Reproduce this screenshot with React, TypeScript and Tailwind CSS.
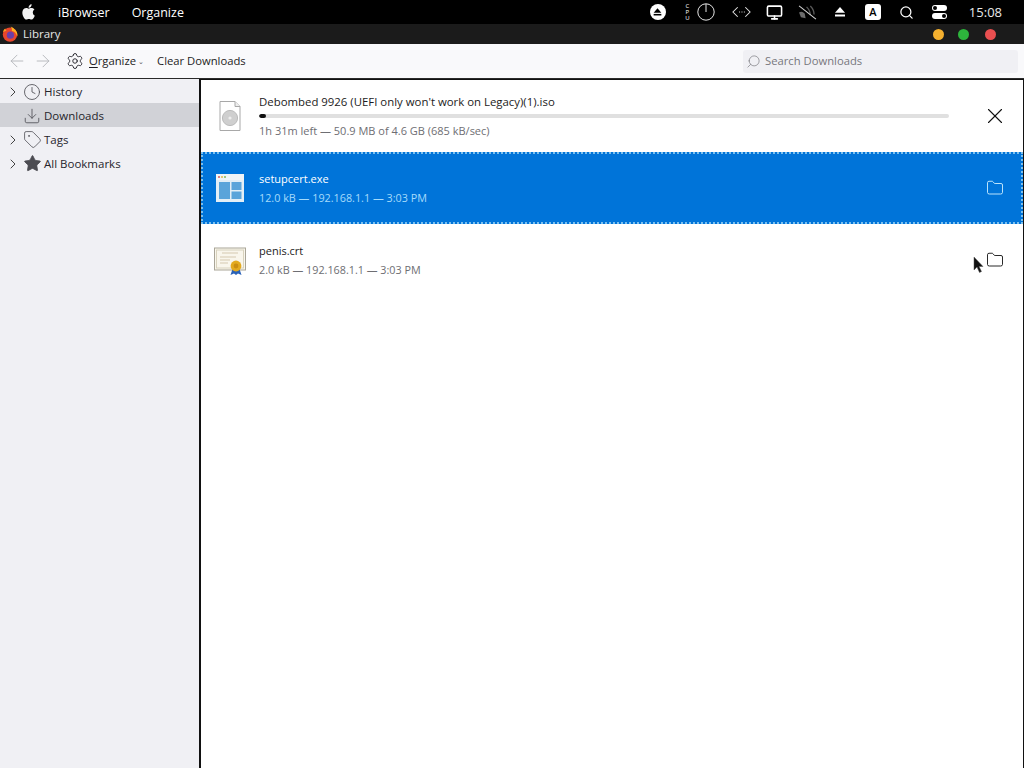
import React from 'react';
import { ChevronRight, Clock, Download, Tag, Star, Settings, ArrowLeft, ArrowRight, Search, X, Folder, Monitor } from 'lucide-react';

const font = { fontFamily: '"Open Sans", sans-serif' };

const Eject = ({ className }: { className?: string }) => (
  <svg viewBox="0 0 14 12" className={className} fill="currentColor">
    <path d="M7 0 L13 7 H1 Z" />
    <rect x="1" y="9" width="12" height="2.4" />
  </svg>
);

const MenuBar = () => (
  <div className="h-6 bg-black text-white flex items-center text-[12.5px] relative">
    <svg viewBox="0 0 24 24" className="w-[18px] h-[18px] ml-[20px] mb-[1px]" fill="#f2f2f2">
      <path d="M17.05 12.54c-.03-2.6 2.12-3.85 2.22-3.91-1.21-1.77-3.09-2.01-3.76-2.04-1.6-.16-3.12.94-3.93.94-.81 0-2.06-.92-3.39-.89-1.74.03-3.35 1.01-4.25 2.57-1.81 3.14-.46 7.8 1.3 10.35.86 1.25 1.89 2.65 3.23 2.6 1.3-.05 1.79-.84 3.36-.84s2.01.84 3.39.81c1.4-.03 2.28-1.27 3.14-2.53.99-1.45 1.4-2.85 1.42-2.93-.03-.01-2.72-1.04-2.73-4.13zM14.47 4.9c.72-.87 1.2-2.08 1.07-3.28-1.03.04-2.28.69-3.02 1.55-.66.77-1.24 2-1.09 3.18 1.15.09 2.32-.58 3.04-1.45z" />
    </svg>
    <span className="ml-[20px] pt-[2px]">iBrowser</span>
    <span className="ml-[22px] pt-[2px]">Organize</span>
    <div className="ml-auto flex items-center h-full">
      <div className="w-4 h-4 rounded-full bg-white flex items-center justify-center mr-[19px]">
        <Eject className="w-[9px] h-[8px] text-black" />
      </div>
      <div className="w-[5px] flex flex-col items-center text-[6px] leading-[6px] mr-[7px]">
        <span>C</span>
        <span>P</span>
        <span>U</span>
      </div>
      <svg viewBox="0 0 18 18" className="w-[18px] h-[18px] mr-[17px]" fill="none" stroke="#e5e5e5" strokeWidth="1">
        <circle cx="9" cy="9" r="8.2" />
        <path d="M9 1 V9" />
      </svg>
      <svg viewBox="0 0 20 14" className="w-[19px] h-[14px] mr-[15px]" fill="none" stroke="#e5e5e5" strokeWidth="1.1">
        <path d="M6 2 L1 7 L6 12 M14 2 L19 7 L14 12" />
        <path d="M7.5 7 h1 M10 7 h1 M12.5 7 h1" />
      </svg>
      <Monitor className="w-[17px] h-[17px] mr-[15px]" strokeWidth={2.2} />
      <svg viewBox="0 0 20 16" className="w-[19px] h-[15px] mr-[17px]" fill="none">
        <path d="M1 8 Q4 6 7 9 L8 14 L3 13 Z" fill="#6b6b6b" />
        <path d="M9 2 Q13 6 13 11 M13 1 Q17 5 17 10" stroke="#5a5a5a" strokeWidth="1.4" />
        <path d="M1 1 L19 15" stroke="#d8d8d8" strokeWidth="1.1" />
      </svg>
      <Eject className="w-[12px] h-[10px] text-white mr-[19px]" />
      <div className="w-4 h-4 rounded-[3px] bg-white text-black flex items-center justify-center text-[11px] font-semibold mr-[18px]">A</div>
      <Search className="w-[15px] h-[15px] mr-[18px]" strokeWidth={2} />
      <div className="flex flex-col gap-[2px] w-[15px] mr-[22px]">
        <div className="h-[6px] rounded-full bg-white flex justify-start items-center pl-[1px]">
          <div className="w-1 h-1 rounded-full bg-black" />
        </div>
        <div className="h-[6px] rounded-full bg-white flex justify-end items-center pr-[1px]">
          <div className="w-1 h-1 rounded-full bg-black" />
        </div>
      </div>
      <span className="mr-[22px] pt-[2px] text-[13px] text-[#e8e8e8]">15:08</span>
    </div>
  </div>
);

const TitleBar = () => (
  <div className="h-5 bg-[#1b1b1b] flex items-center text-[#e6e6e6] text-[11.5px]">
    <svg viewBox="0 0 16 16" className="w-4 h-4 ml-[2px]">
      <circle cx="8" cy="8.6" r="7.2" fill="#e8462c" />
      <circle cx="8.4" cy="9.2" r="3.6" fill="#6b3fa8" />
      <path d="M8.6 .4 C13 2.4 16 6 15.4 10.4 C14 7 12.4 5.4 9.8 5 C10.2 3.4 9.8 1.8 8.6 .4 Z" fill="#ffb11f" />
      <path d="M1 6 C1.4 4.4 2.4 3.2 3.4 2.6 C3.4 3.6 3.8 4.4 4.6 4.8 C3 5.2 2 6 1 6 Z" fill="#ff9a1f" />
    </svg>
    <span className="ml-[5px]">Library</span>
    <div className="ml-auto flex items-center">
      <div className="w-[11px] h-[11px] rounded-full bg-[#f4b02f]" />
      <div className="w-[11px] h-[11px] rounded-full bg-[#2db53c] ml-[14px]" />
      <div className="w-[11px] h-[11px] rounded-full bg-[#e94f50] ml-[16px] mr-[28px]" />
    </div>
  </div>
);

const ToolBar = () => (
  <div className="h-[35px] bg-[#f9f9fb] flex items-center text-[11.25px] text-[#1c1b22] border-b border-[#2a2a2a]">
    <ArrowLeft className="w-5 h-5 ml-[7px] text-[#b4b6ba]" strokeWidth={1.1} />
    <ArrowRight className="w-5 h-5 ml-[6px] text-[#b4b6ba]" strokeWidth={1.1} />
    <Settings className="w-[18px] h-[18px] ml-[13px]" strokeWidth={1.2} />
    <span className="ml-[5px]"><span className="underline underline-offset-2">O</span>rganize</span>
    <span className="ml-[2px] text-[7px] leading-none text-[#555]">⌄</span>
    <span className="ml-[13px]">Clear Downloads</span>
    <div className="ml-auto w-[275px] h-[23px] bg-[#f0f0f4] rounded-[3px] flex items-center text-[#77777d] mr-[6px]">
      <Search className="w-[15px] h-[15px] ml-[3px] -scale-x-100" strokeWidth={1.1} />
      <span className="ml-[4px]">Search Downloads</span>
    </div>
  </div>
);

const SideItem = ({ icon, label, expand = true, active = false }: { icon: React.ReactNode; label: string; expand?: boolean; active?: boolean }) => (
  <div className={`h-6 pt-[1px] flex items-center text-[11.5px] text-[#26252c] ${active ? 'bg-[#d1d2d7]' : ''}`}>
    <div className="w-[24px] pl-[5px]">
      {expand && <ChevronRight className="w-4 h-4 text-[#444]" strokeWidth={1.5} />}
    </div>
    <div className="w-4 h-4 flex items-center justify-center text-[#4c4c52]">{icon}</div>
    <span className="ml-[4px]">{label}</span>
  </div>
);

const SideBar = () => (
  <div className="w-[199px] bg-[#f0f0f4] shrink-0">
    <SideItem icon={<Clock className="w-[18px] h-[18px] shrink-0" strokeWidth={1.1} />} label="History" />
    <SideItem icon={<Download className="w-[18px] h-[18px] shrink-0" strokeWidth={1.1} />} label="Downloads" expand={false} active />
    <SideItem icon={<Tag className="w-[19px] h-[19px] shrink-0" strokeWidth={1} />} label="Tags" />
    <SideItem icon={<Star className="w-[19px] h-[19px] shrink-0" fill="currentColor" strokeWidth={1} />} label="All Bookmarks" />
  </div>
);

const IsoIcon = () => (
  <svg viewBox="0 0 22 30" className="w-[22px] h-[30px]">
    <path d="M1 .5 H16 L21 5.5 V29.5 H1 Z" fill="#fff" stroke="#a8a8a8" />
    <path d="M16 .5 V5.5 H21" fill="#eee" stroke="#a8a8a8" />
    <circle cx="11" cy="17" r="7.6" fill="#cfcfcf" stroke="#bbb" />
    <circle cx="11" cy="17" r="1.6" fill="#eee" />
  </svg>
);

const ExeIcon = () => (
  <svg viewBox="0 0 30 30" className="w-[30px] h-[30px]">
    <rect x="1" y="1" width="28" height="28" fill="#e2eef6" />
    <rect x="1" y="1" width="28" height="6" fill="#f0f4f7" />
    <circle cx="4" cy="4" r="1" fill="#d65a5a" />
    <circle cx="7" cy="4" r="1" fill="#e0b94a" />
    <circle cx="10" cy="4" r="1" fill="#7fb85a" />
    <rect x="4" y="9" width="11" height="17" fill="#5aa4da" />
    <rect x="16.5" y="9" width="10" height="8" fill="#5aa4da" />
    <rect x="16.5" y="18.5" width="10" height="7.5" fill="#5aa4da" />
  </svg>
);

const CertIcon = () => (
  <svg viewBox="0 0 32 30" className="w-8 h-[30px]">
    <rect x=".5" y="3" width="31" height="22" fill="#f9f6ec" stroke="#a9a597" strokeWidth="1" />
    <rect x="2.5" y="5" width="27" height="18" fill="none" stroke="#d8d2bd" />
    <path d="M8 8 H24 M6 12 H22 M6 15 H16 M6 18 H14" stroke="#d5c9b0" />
    <path d="M18.5 24 L16.5 30 L20 28.6 L22 30 L24 28.6 L27.5 30 L25.5 24 Z" fill="#2a62b8" />
    <circle cx="22" cy="21" r="5.4" fill="#e3aa1f" />
    <circle cx="22" cy="21" r="2.4" fill="#c98d12" />
  </svg>
);

const DownloadRow = ({ icon, name, info, selected = false }: { icon: React.ReactNode; name: string; info: string; selected?: boolean }) => (
  <div className={`h-[72px] flex items-center relative ${selected ? 'bg-[#0074d9] text-white' : 'bg-white text-[#1c1b22]'}`}>
    {selected && <div className="absolute inset-0 border-2 border-dotted border-[#7cc0ee]" />}
    <div className="w-[58px] flex justify-center shrink-0">{icon}</div>
    <div className="flex-1 text-[11px]">
      <div className="leading-[17px]">{name}</div>
      <div className={`text-[10.8px] leading-[17px] mt-[2px] ${selected ? 'text-[#a5dbfb]' : 'text-[#6e6e73]'}`}>{info}</div>
    </div>
    <Folder className={`w-[18px] h-[18px] mr-[19px] ${selected ? 'text-[#cfefff]' : 'text-[#111]'}`} strokeWidth={1.2} />
  </div>
);

const Content = () => (
  <div className="flex-1 bg-white border-l-2 border-r border-t border-[#111] min-w-0">
    <div className="h-[72px] flex items-start text-[#1c1b22]">
      <div className="w-[58px] h-full flex items-center justify-center shrink-0"><IsoIcon /></div>
      <div className="flex-1 text-[11.4px] pt-[13px]">
        <div className="leading-[17px]">Debombed 9926 (UEFI only won't work on Legacy)(1).iso</div>
        <div className="h-1 mt-[4px] rounded-full bg-[#e0e0e0] overflow-hidden">
          <div className="h-1 w-[7px] rounded-full bg-[#111]" />
        </div>
        <div className="text-[11px] leading-[17px] mt-[4px] text-[#6e6e73]">1h 31m left — 50.9 MB of 4.6 GB (685 kB/sec)</div>
      </div>
      <div className="h-full flex items-center ml-[33px] mr-[15px]">
        <X className="w-[26px] h-[26px] text-[#111]" strokeWidth={1} />
      </div>
    </div>
    <DownloadRow icon={<ExeIcon />} name="setupcert.exe" info="12.0 kB — 192.168.1.1 — 3:03 PM" selected />
    <DownloadRow icon={<CertIcon />} name="penis.crt" info="2.0 kB — 192.168.1.1 — 3:03 PM" />
  </div>
);

const Cursor = () => (
  <svg viewBox="0 0 12 18" className="absolute left-[973px] top-[256px] w-3 h-[18px]">
    <path d="M1 1 V14 L4 11 L6.5 16.5 L8.5 15.5 L6 10.5 H10 Z" fill="#111" stroke="#555" strokeWidth=".5" />
  </svg>
);

export default function App() {
  return (
    <div className="w-[1024px] h-[768px] flex flex-col overflow-hidden relative" style={font}>
      <MenuBar />
      <TitleBar />
      <ToolBar />
      <div className="flex flex-1 min-h-0">
        <SideBar />
        <Content />
      </div>
      <Cursor />
    </div>
  );
}
